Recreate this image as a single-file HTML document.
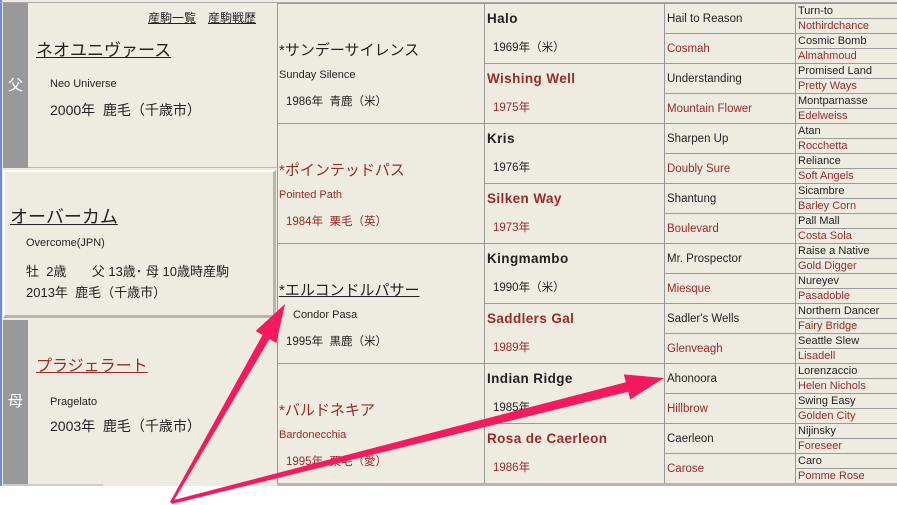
<!DOCTYPE html>
<html><head><meta charset="utf-8">
<style>
*{margin:0;padding:0;box-sizing:border-box}
body{width:897px;height:505px;background:#fff;position:relative;overflow:hidden;font-family:"Liberation Sans","Noto Sans CJK JP",sans-serif;color:#222}
.a{position:absolute;white-space:nowrap}
.bg{position:absolute;left:0;top:0;width:897px;height:486px;background:#eeece1;border-left:2px solid #6a8fd8}
.r{color:#9b2a2a}
.c5{position:absolute;left:795px;width:102px;height:15px;border-top:1px solid #999;border-left:1px solid #999;font-size:11px;line-height:14px;padding-left:2px}
.c4{position:absolute;left:664px;width:131px;height:30px;border-top:1px solid #999;border-left:1px solid #999;font-size:11.5px;line-height:30px;padding-left:2px}
.c3{position:absolute;left:484px;width:180px;height:60px;border-top:1px solid #999;border-left:1px solid #999}
.c3 b{position:absolute;left:2px;top:7px;font-size:13.5px;letter-spacing:.4px}
.c3 span{position:absolute;left:8px;top:35px;font-size:11.5px}
.c2{position:absolute;left:277px;width:207px;height:120px;border-top:1px solid #999;border-left:1px solid #999}
.c2 .n{position:absolute;left:1px;top:35px;font-size:15px}
.c2 .e{position:absolute;left:1px;top:65px;font-size:11px}
.c2 .y{position:absolute;left:8px;top:89px;font-size:11.5px}
.side{position:absolute;left:3px;width:25px;background:#999;color:#fff;font-size:15px;text-align:center}
</style></head><body>
<div class="bg"></div>
<div class="a" style="left:0;top:2px;width:897px;height:1px;background:#aaa"></div>
<!-- col1 -->
<div class="a" style="left:3px;top:3px;width:274px;height:165px;border-bottom:1px solid #bbb"></div>
<div class="side" style="top:3px;height:165px;line-height:165px">父</div>
<div class="a" style="left:148px;top:9px;font-size:12px;text-decoration:underline">産駒一覧</div>
<div class="a" style="left:208px;top:9px;font-size:12px;text-decoration:underline">産駒戦歴</div>
<div class="a" style="left:36px;top:36px;font-size:17px;text-decoration:underline">ネオユニヴァース</div>
<div class="a" style="left:50px;top:78px;font-size:11px">Neo Universe</div>
<div class="a" style="left:50px;top:100px;font-size:14px">2000年&nbsp; 鹿毛（千歳市）</div>
<div class="a" style="left:3px;top:170px;width:273px;height:148px;border-top:2px solid #fff;border-left:2px solid #fff;border-right:3px solid #b8b6aa;border-bottom:3px solid #b8b6aa"></div>
<div class="a" style="left:10px;top:203px;font-size:18px;text-decoration:underline">オーバーカム</div>
<div class="a" style="left:26px;top:237px;font-size:11px">Overcome(JPN)</div>
<div class="a" style="left:26px;top:261px;font-size:13px">牡&nbsp; 2歳 &nbsp; &nbsp; &nbsp; 父 13歳･ 母 10歳時産駒</div>
<div class="a" style="left:26px;top:282px;font-size:13px">2013年&nbsp; 鹿毛（千歳市）</div>
<div class="side" style="top:320px;height:164px;line-height:164px">母</div>
<div class="a" style="left:3px;top:484px;width:100px;height:2px;background:#ccc"></div>
<div class="a r" style="left:36px;top:352px;font-size:16px;text-decoration:underline">プラジェラート</div>
<div class="a" style="left:50px;top:396px;font-size:11px">Pragelato</div>
<div class="a" style="left:50px;top:416px;font-size:14px">2003年&nbsp; 鹿毛（千歳市）</div>
<!-- col2 -->
<div class="c2" style="top:3px"><div class="n">*サンデーサイレンス</div><div class="e">Sunday Silence</div><div class="y">1986年&nbsp; 青鹿（米）</div></div>
<div class="c2 r" style="top:123px"><div class="n">*ポインテッドパス</div><div class="e">Pointed Path</div><div class="y">1984年&nbsp; 栗毛（英）</div></div>
<div class="c2" style="top:243px"><div class="n" style="text-decoration:underline">*エルコンドルパサー</div><div class="e" style="left:15px">Condor Pasa</div><div class="y">1995年&nbsp; 黒鹿（米）</div></div>
<div class="c2 r" style="top:363px"><div class="n">*バルドネキア</div><div class="e">Bardonecchia</div><div class="y">1995年&nbsp; 栗毛（愛）</div></div>
<!-- col3 -->
<div class="c3" style="top:3px"><b>Halo</b><span>1969年（米）</span></div>
<div class="c3 r" style="top:63px"><b>Wishing Well</b><span>1975年</span></div>
<div class="c3" style="top:123px"><b>Kris</b><span>1976年</span></div>
<div class="c3 r" style="top:183px"><b>Silken Way</b><span>1973年</span></div>
<div class="c3" style="top:243px"><b>Kingmambo</b><span>1990年（米）</span></div>
<div class="c3 r" style="top:303px"><b>Saddlers Gal</b><span>1989年</span></div>
<div class="c3" style="top:363px"><b>Indian Ridge</b><span>1985年</span></div>
<div class="c3 r" style="top:423px"><b>Rosa de Caerleon</b><span>1986年</span></div>
<!-- col4 -->
<div class="c4" style="top:3px">Hail to Reason</div>
<div class="c4 r" style="top:33px">Cosmah</div>
<div class="c4" style="top:63px">Understanding</div>
<div class="c4 r" style="top:93px">Mountain Flower</div>
<div class="c4" style="top:123px">Sharpen Up</div>
<div class="c4 r" style="top:153px">Doubly Sure</div>
<div class="c4" style="top:183px">Shantung</div>
<div class="c4 r" style="top:213px">Boulevard</div>
<div class="c4" style="top:243px">Mr. Prospector</div>
<div class="c4 r" style="top:273px">Miesque</div>
<div class="c4" style="top:303px">Sadler's Wells</div>
<div class="c4 r" style="top:333px">Glenveagh</div>
<div class="c4" style="top:363px">Ahonoora</div>
<div class="c4 r" style="top:393px">Hillbrow</div>
<div class="c4" style="top:423px">Caerleon</div>
<div class="c4 r" style="top:453px">Carose</div>
<!-- col5 -->
<div class="c5" style="top:3px">Turn-to</div>
<div class="c5 r" style="top:18px">Nothirdchance</div>
<div class="c5" style="top:33px">Cosmic Bomb</div>
<div class="c5 r" style="top:48px">Almahmoud</div>
<div class="c5" style="top:63px">Promised Land</div>
<div class="c5 r" style="top:78px">Pretty Ways</div>
<div class="c5" style="top:93px">Montparnasse</div>
<div class="c5 r" style="top:108px">Edelweiss</div>
<div class="c5" style="top:123px">Atan</div>
<div class="c5 r" style="top:138px">Rocchetta</div>
<div class="c5" style="top:153px">Reliance</div>
<div class="c5 r" style="top:168px">Soft Angels</div>
<div class="c5" style="top:183px">Sicambre</div>
<div class="c5 r" style="top:198px">Barley Corn</div>
<div class="c5" style="top:213px">Pall Mall</div>
<div class="c5 r" style="top:228px">Costa Sola</div>
<div class="c5" style="top:243px">Raise a Native</div>
<div class="c5 r" style="top:258px">Gold Digger</div>
<div class="c5" style="top:273px">Nureyev</div>
<div class="c5 r" style="top:288px">Pasadoble</div>
<div class="c5" style="top:303px">Northern Dancer</div>
<div class="c5 r" style="top:318px">Fairy Bridge</div>
<div class="c5" style="top:333px">Seattle Slew</div>
<div class="c5 r" style="top:348px">Lisadell</div>
<div class="c5" style="top:363px">Lorenzaccio</div>
<div class="c5 r" style="top:378px">Helen Nichols</div>
<div class="c5" style="top:393px">Swing Easy</div>
<div class="c5 r" style="top:408px">Golden City</div>
<div class="c5" style="top:423px">Nijinsky</div>
<div class="c5 r" style="top:438px">Foreseer</div>
<div class="c5" style="top:453px">Caro</div>
<div class="c5 r" style="top:468px">Pomme Rose</div>
<div class="a" style="left:277px;top:483px;width:620px;height:3px;background:#b8b6aa"></div>
<!-- arrows -->
<svg class="a" style="left:0;top:0" width="897" height="505">
<g fill="#f5195e">
<polygon points="170,502 262.5,335 255.6,331 285,304 276.4,343 269.5,339 172.5,503"/>
<polygon points="170,501 625.8,382.2 623.8,374.4 664,378 630.2,399.6 628.2,391.8 172,504"/>
</g>
</svg>
</body></html>
